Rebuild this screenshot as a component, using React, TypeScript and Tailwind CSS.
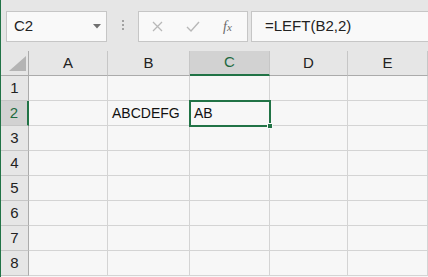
import React from "react";

const cols = ["A", "B", "C", "D", "E"];
const rows = [1, 2, 3, 4, 5, 6, 7, 8];

function NameBox() {
  return (
    <div className="ml-[5px] mt-[11px] flex h-[31px] w-[101px] items-center justify-between border border-[#c6c6c6] bg-[#f9f9f9] pl-[7px] pr-[5px]">
      <span className="text-[15px] text-[#222]">C2</span>
      <svg width="8" height="5" viewBox="0 0 8 5">
        <polygon points="0,0 8,0 4,4.5" fill="#707070" />
      </svg>
    </div>
  );
}

function FormulaButtons() {
  return (
    <div className="ml-[14px] mt-[11px] flex h-[31px] w-[110px] items-center border border-[#c6c6c6] bg-[#f9f9f9]">
      <svg className="ml-[13px]" width="11" height="11" viewBox="0 0 11 11">
        <path d="M1 1 L10 10 M10 1 L1 10" stroke="#b8b8b8" strokeWidth="1.3" />
      </svg>
      <svg className="ml-[23px]" width="14" height="11" viewBox="0 0 14 11">
        <path d="M1 6 L5 10 L13 1" stroke="#b8b8b8" strokeWidth="1.4" fill="none" />
      </svg>
      <span className="ml-[23px] font-['Liberation_Serif',serif] text-[14px] italic text-[#6a6a6a]">
        f<span className="text-[11px]">x</span>
      </span>
    </div>
  );
}

function Toolbar() {
  return (
    <div className="flex h-[51px] items-start bg-[#e6e6e6]">
      <NameBox />
      <div className="ml-[15px] mt-[20px] flex flex-col gap-[2px]">
        <div className="h-[2px] w-[2px] bg-[#a2a2a2]" />
        <div className="h-[2px] w-[2px] bg-[#a2a2a2]" />
        <div className="h-[2px] w-[2px] bg-[#a2a2a2]" />
      </div>
      <FormulaButtons />
      <div className="ml-[3px] mt-[11px] flex h-[31px] flex-1 items-center border-y border-l border-[#c6c6c6] bg-[#f9f9f9] pl-[13px]">
        <span className="text-[15px] text-[#222]">=LEFT(B2,2)</span>
      </div>
    </div>
  );
}

function Corner() {
  return (
    <div className="relative h-[25px] border-b border-r border-[#ababab] bg-[#e6e6e6]">
      <svg className="absolute left-0 top-0" width="28" height="25" viewBox="0 0 28 25">
        <polygon points="8,20 25,20 25,5" fill="#b4b4b4" />
      </svg>
    </div>
  );
}

function ColHeader({ label }: { label: string }) {
  const active = label === "C";
  return (
    <div
      className={
        active
          ? "flex h-[25px] items-center justify-center border-b-2 border-r border-b-[#217346] border-r-[#c6c6c6] bg-[#d2d2d2] text-[15px] text-[#1f6a40]"
          : "flex h-[25px] items-center justify-center border-b border-r border-b-[#ababab] border-r-[#c6c6c6] bg-[#e6e6e6] text-[15px] text-[#222]"
      }
    >
      {label}
    </div>
  );
}

function RowHeader({ n }: { n: number }) {
  const active = n === 2;
  return (
    <div
      className={
        active
          ? "flex h-[25px] items-center justify-center border-b border-r-2 border-b-[#c6c6c6] border-r-[#217346] bg-[#d2d2d2] text-[15px] text-[#1f6a40]"
          : "flex h-[25px] items-center justify-center border-b border-r border-b-[#c6c6c6] border-r-[#ababab] bg-[#e6e6e6] text-[15px] text-[#222]"
      }
    >
      {n}
    </div>
  );
}

function Cell({ row, col }: { row: number; col: string }) {
  let text = "";
  if (row === 2 && col === "B") text = "ABCDEFG";
  if (row === 2 && col === "C") text = "AB";
  const selected = row === 2 && col === "C";
  return (
    <div className="relative flex h-[25px] items-center border-b border-r border-[#d4d4d4] bg-[#f7f7f7] pl-[4px] text-[14px] text-[#111]">
      {text}
      {selected && (
        <div className="absolute left-[-1px] top-[-1px] z-10 h-[27px] w-[82px] border-2 border-[#217346]">
          <div className="absolute bottom-[-4px] right-[-4px] h-[6px] w-[6px] border border-[#f7f7f7] bg-[#217346]" />
        </div>
      )}
    </div>
  );
}

export default function App() {
  return (
    <div className="h-[277px] w-[428px] overflow-hidden border-l border-[#217346] bg-[#f7f7f7] font-['Liberation_Sans',Arial,sans-serif]">
      <Toolbar />
      <div className="grid grid-cols-[28px_79px_82px_80px_78px_80px]">
        <Corner />
        {cols.map((c) => (
          <ColHeader key={c} label={c} />
        ))}
        {rows.map((r) => (
          <React.Fragment key={r}>
            <RowHeader n={r} />
            {cols.map((c) => (
              <Cell key={c} row={r} col={c} />
            ))}
          </React.Fragment>
        ))}
      </div>
    </div>
  );
}
